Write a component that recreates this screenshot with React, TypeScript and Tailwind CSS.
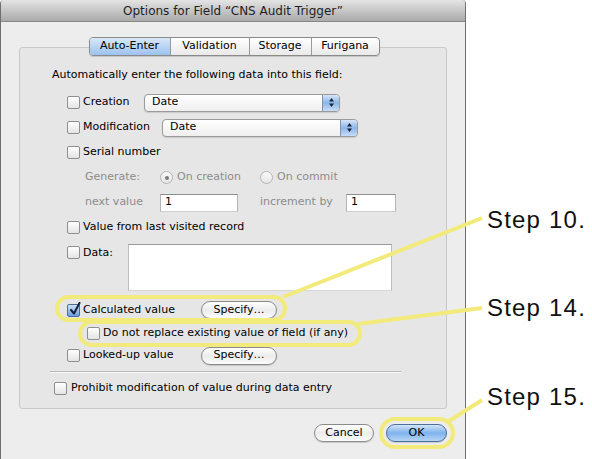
import React from 'react';

const Check = ({ checked = false }: { checked?: boolean }) => (
  <span
    className={`relative flex h-[13px] w-[13px] shrink-0 items-center justify-center rounded-[2px] border ${
      checked
        ? 'border-[#4b6d9c] bg-linear-to-b from-[#cfe0f6] to-[#6d9fdd]'
        : 'border-[#8f8f8f] bg-linear-to-b from-white to-[#e4e4e4]'
    }`}
  >
    {checked && (
      <svg className="absolute -top-[3px] left-[1px]" width="12" height="14" viewBox="0 0 12 14">
        <path d="M2 8 L5 11.5 L10.5 1" fill="none" stroke="#14213a" strokeWidth="2" strokeLinecap="round" strokeLinejoin="round" />
      </svg>
    )}
  </span>
);

const Radio = ({ on = false }: { on?: boolean }) => (
  <span className="flex h-[13px] w-[13px] shrink-0 items-center justify-center rounded-full border border-[#b4b4b4] bg-linear-to-b from-[#fafafa] to-[#e6e6e6]">
    {on && <span className="h-[4px] w-[4px] rounded-full bg-[#7a7a7a]" />}
  </span>
);

const Select = ({ w }: { w: string }) => (
  <div className={`flex h-[18px] ${w} items-stretch rounded-[4px] border border-[#9a9a9a] bg-linear-to-b from-white to-[#efefef] shadow-[0_1px_1px_rgba(0,0,0,0.12)]`}>
    <span className="flex flex-1 items-center pl-[7px]">Date</span>
    <span className="flex w-[17px] items-center justify-center rounded-r-[3px] border-l border-[#8093b3] bg-linear-to-b from-[#d6e5f7] via-[#8ab6ea] to-[#c8ddf6]">
      <svg width="7" height="11" viewBox="0 0 7 11">
        <path d="M3.5 1 L6 4.5 L1 4.5 Z M3.5 10 L6 6.5 L1 6.5 Z" fill="#1c2538" />
      </svg>
    </span>
  </div>
);

const Field = ({ w }: { w: string }) => (
  <div className={`flex h-[18px] ${w} items-center border border-t-[#8e8e8e] border-x-[#b5b5b5] border-b-[#cfcfcf] bg-white pl-[4px] text-black`}>
    1
  </div>
);

const Pill = ({ label, w, blue = false }: { label: string; w: string; blue?: boolean }) => (
  <div
    className={`flex h-[18px] ${w} items-center justify-center rounded-full border ${
      blue
        ? 'border-[#4f6f9c] bg-linear-to-b from-[#d3e5f9] via-[#7eb2ec] to-[#b7d6f6]'
        : 'border-[#8a8a8a] bg-linear-to-b from-white via-[#ececec] to-[#fbfbfb]'
    } shadow-[0_1px_1px_rgba(0,0,0,0.15)]`}
  >
    {label}
  </div>
);

export default function App() {
  return (
    <div className="relative flex h-[459px] w-[592px] overflow-hidden bg-white font-['DejaVu_Sans',sans-serif] text-[11px] text-black">
      {/* dialog */}
      <div className="flex h-[459px] w-[466px] shrink-0 flex-col overflow-hidden rounded-t-[4px] border-x border-[#6f6f6f] bg-[#ededed]">
        <div className="flex h-[22px] shrink-0 items-center justify-center border-b border-[#888] bg-linear-to-b from-[#e4e4e4] to-[#aaaaaa] text-[12px] text-[#1e1e1e]">
          Options for Field “CNS Audit Trigger”
        </div>

        <div className="ml-[18px] mt-[25px] h-[362px] w-[428px] shrink-0 rounded-[3px] border border-[#c9c9c9] bg-[#e6e6e6]">
          {/* tabs */}
          <div className="-mt-[11px] flex justify-center pl-[2px]">
            <div className="flex h-[19px] overflow-hidden rounded-[4px] border border-[#8a8a8a] bg-linear-to-b from-white to-[#e9e9e9] shadow-[0_1px_1px_rgba(0,0,0,0.15)]">
              <span className="flex w-[80px] items-center justify-center bg-linear-to-b from-[#d8e7f8] to-[#9cc2ee]">Auto-Enter</span>
              <span className="flex w-[79px] items-center justify-center border-l border-[#9a9a9a]">Validation</span>
              <span className="flex w-[62px] items-center justify-center border-l border-[#9a9a9a]">Storage</span>
              <span className="flex w-[68px] items-center justify-center border-l border-[#9a9a9a]">Furigana</span>
            </div>
          </div>

          <div className="ml-[32px] mt-[11px] flex h-[16px] items-center">
            Automatically enter the following data into this field:
          </div>

          <div className="ml-[47px] mt-[7px] flex flex-col">
            <div className="flex h-[25px] items-center">
              <Check />
              <span className="ml-[3px] w-[61px]">Creation</span>
              <Select w="w-[196px]" />
            </div>
            <div className="flex h-[25px] items-center">
              <Check />
              <span className="ml-[3px] w-[79px]">Modification</span>
              <Select w="w-[196px]" />
            </div>
            <div className="flex h-[25px] items-center">
              <Check />
              <span className="ml-[3px]">Serial number</span>
            </div>
            <div className="ml-[18px] flex h-[25px] items-center text-[#8c8c8c]">
              <span className="w-[75px]">Generate:</span>
              <div className="flex w-[100px] items-center gap-[4px]">
                <Radio on />
                <span>On creation</span>
              </div>
              <div className="flex items-center gap-[4px]">
                <Radio />
                <span>On commit</span>
              </div>
            </div>
            <div className="ml-[18px] flex h-[25px] items-center text-[#8c8c8c]">
              <span className="w-[75px]">next value</span>
              <Field w="w-[78px]" />
              <span className="ml-[22px] w-[86px]">increment by</span>
              <Field w="w-[50px]" />
            </div>
            <div className="flex h-[25px] items-center">
              <Check />
              <span className="ml-[3px]">Value from last visited record</span>
            </div>
            <div className="mt-[4px] flex h-[47px] items-start">
              <span className="mt-[2px]">
                <Check />
              </span>
              <span className="ml-[3px] mt-[1px] w-[45px]">Data:</span>
              <div className="h-[47px] w-[264px] border border-t-[#9a9a9a] border-x-[#bdbdbd] border-b-[#d6d6d6] bg-white" />
            </div>
            <div className="mt-[7px] flex h-[24px] items-center">
              <Check checked />
              <span className="ml-[3px] w-[118px]">Calculated value</span>
              <Pill label="Specify…" w="w-[76px]" />
            </div>
            <div className="ml-[20px] flex h-[22px] items-center">
              <Check />
              <span className="ml-[3px]">Do not replace existing value of field (if any)</span>
            </div>
            <div className="flex h-[23px] items-center">
              <Check />
              <span className="ml-[3px] w-[118px]">Looked-up value</span>
              <Pill label="Specify…" w="w-[76px]" />
            </div>
          </div>

          <div className="ml-[30px] mt-[4px] h-[2px] w-[351px] border-t border-[#b9b9b9] bg-[#f7f7f7]" />

          <div className="ml-[34px] mt-[4px] flex h-[22px] items-center">
            <Check />
            <span className="ml-[4px]">Prohibit modification of value during data entry</span>
          </div>
        </div>

        <div className="mt-[15px] flex justify-end gap-[12px] pr-[18px]">
          <Pill label="Cancel" w="w-[60px]" />
          <Pill label="OK" w="w-[61px]" blue />
        </div>
      </div>

      {/* step labels */}
      <div className="flex flex-col pl-[21px] pt-[208px] font-['Liberation_Sans',Arial,sans-serif] text-[24px] leading-[24px] tracking-[1.2px] text-[#111]">
        <span>Step 10.</span>
        <span className="mt-[64px]">Step 14.</span>
        <span className="mt-[65px]">Step 15.</span>
      </div>

      {/* yellow callouts */}
      <svg className="pointer-events-none absolute inset-0" width="592" height="459" viewBox="0 0 592 459">
        <g fill="none" stroke="#f2ea7a" strokeWidth="4">
          <rect x="57" y="297" width="228" height="23" rx="11.5" />
          <rect x="80" y="322" width="280" height="23" rx="11.5" />
          <rect x="381" y="419" width="72" height="28" rx="14" />
          <line x1="283" y1="297" x2="482" y2="218" />
          <line x1="358" y1="324" x2="482" y2="308" />
          <line x1="449" y1="421" x2="482" y2="400" />
        </g>
      </svg>
    </div>
  );
}
